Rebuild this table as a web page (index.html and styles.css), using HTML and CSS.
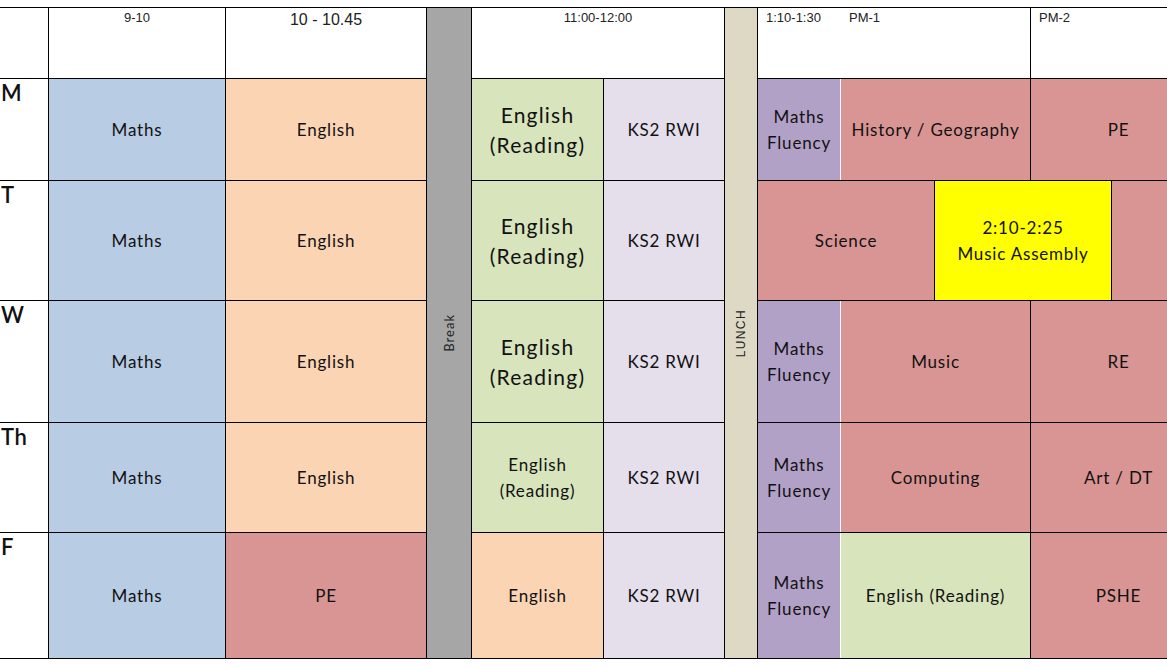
FILE: index.html
```html
<!DOCTYPE html>
<html>
<head>
<meta charset="utf-8">
<link rel="stylesheet" href="styles.css">
<title>Timetable</title>
</head>
<body>
<div class="tt">
  <!-- header -->
  <div class="cell head corner"></div>
  <div class="cell head hc sm">9-10</div>
  <div class="cell head hc lg">10 - 10.45</div>
  <div class="bar brk"><span>Break</span></div>
  <div class="cell head hc sm c5-6">11:00-12:00</div>
  <div class="bar lunch"><span>LUNCH</span></div>
  <div class="cell head hl sm">1:10-1:30</div>
  <div class="cell head hl sm c9-10 wl">PM-1</div>
  <div class="cell head hl sm c11-12">PM-2</div>

  <!-- Monday -->
  <div class="cell day">M</div>
  <div class="cell maths">Maths</div>
  <div class="cell eng">English</div>
  <div class="cell read big">English<br>(Reading)</div>
  <div class="cell rwi">KS2 RWI</div>
  <div class="cell flu">Maths<br>Fluency</div>
  <div class="cell pink c9-10 wl">History / Geography</div>
  <div class="cell pink c11-12">PE</div>

  <!-- Tuesday -->
  <div class="cell day">T</div>
  <div class="cell maths">Maths</div>
  <div class="cell eng">English</div>
  <div class="cell read big">English<br>(Reading)</div>
  <div class="cell rwi">KS2 RWI</div>
  <div class="cell pink c8-9">Science</div>
  <div class="cell yellow c10-11">2:10-2:25<br>Music Assembly</div>
  <div class="cell pink"></div>

  <!-- Wednesday -->
  <div class="cell day">W</div>
  <div class="cell maths">Maths</div>
  <div class="cell eng">English</div>
  <div class="cell read big">English<br>(Reading)</div>
  <div class="cell rwi">KS2 RWI</div>
  <div class="cell flu">Maths<br>Fluency</div>
  <div class="cell pink c9-10 wl">Music</div>
  <div class="cell pink c11-12">RE</div>

  <!-- Thursday -->
  <div class="cell day">Th</div>
  <div class="cell maths">Maths</div>
  <div class="cell eng">English</div>
  <div class="cell read">English<br>(Reading)</div>
  <div class="cell rwi">KS2 RWI</div>
  <div class="cell flu">Maths<br>Fluency</div>
  <div class="cell pink c9-10 wl">Computing</div>
  <div class="cell pink c11-12">Art / DT</div>

  <!-- Friday -->
  <div class="cell day">F</div>
  <div class="cell maths">Maths</div>
  <div class="cell pink">PE</div>
  <div class="cell eng">English</div>
  <div class="cell rwi">KS2 RWI</div>
  <div class="cell flu">Maths<br>Fluency</div>
  <div class="cell read c9-10 wl">English (Reading)</div>
  <div class="cell pink c11-12">PSHE</div>
</div>
</body>
</html>
```

FILE: styles.css
```css
html, body {
  margin: 0;
  padding: 0;
  background: #ffffff;
  overflow: hidden;
}

.tt {
  margin-top: 7px;
  width: 1206px;
  display: grid;
  grid-template-columns: 48px 176px 200px 44px 131px 120px 32px 82px 93px 95px 80px 94px;
  grid-template-rows: 70px 101px 119px 121px 109px 125px;
  gap: 1px;
  padding: 1px 0;
  background: #000000;
  font-family: "Lato", "Open Sans", sans-serif;
  color: #111111;
}

.cell {
  background: #ffffff;
  display: flex;
  align-items: center;
  justify-content: center;
  text-align: center;
  font-size: 17px;
  line-height: 26px;
  letter-spacing: 0.8px;
}

.head {
  align-items: flex-start;
  font-family: "Liberation Sans", Arial, sans-serif;
  color: #222222;
  letter-spacing: 0;
}
.head.sm { font-size: 13px; line-height: 20px; }
.head.lg { font-size: 16px; line-height: 24px; }
.head.hl { justify-content: flex-start; padding-left: 8px; }

.day {
  align-items: flex-start;
  justify-content: flex-start;
  font-size: 22px;
  line-height: 28px;
  font-weight: 600;
  padding-left: 1px;
  letter-spacing: 0.5px;
}

.bar {
  grid-row: 1 / span 6;
  display: flex;
  align-items: center;
  justify-content: center;
}
.bar span {
  writing-mode: vertical-rl;
  transform: rotate(180deg);
  font-size: 13px;
  letter-spacing: 1px;
  color: #222222;
}
.brk { grid-column: 4; background: #a6a6a6; }
.lunch { grid-column: 7; background: #ddd9c4; }
.lunch span { font-family: "Liberation Sans", Arial, sans-serif; font-size: 12px; letter-spacing: 1.4px; }

.c5-6 { grid-column: 5 / span 2; }
.c8-9 { grid-column: 8 / span 2; }
.c9-10 { grid-column: 9 / span 2; }
.c10-11 { grid-column: 10 / span 2; }
.c11-12 { grid-column: 11 / span 2; }

.wl { box-shadow: -1px 0 0 #ffffff; }

.maths { background: #b8cce4; }
.eng { background: #fbd4b4; }
.read { background: #d7e4bc; }
.rwi { background: #e5dfec; }
.flu { background: #b2a1c7; }
.pink { background: #d99594; }
.yellow { background: #ffff00; }

.big { font-size: 21px; line-height: 30px; letter-spacing: 1.2px; }
```
